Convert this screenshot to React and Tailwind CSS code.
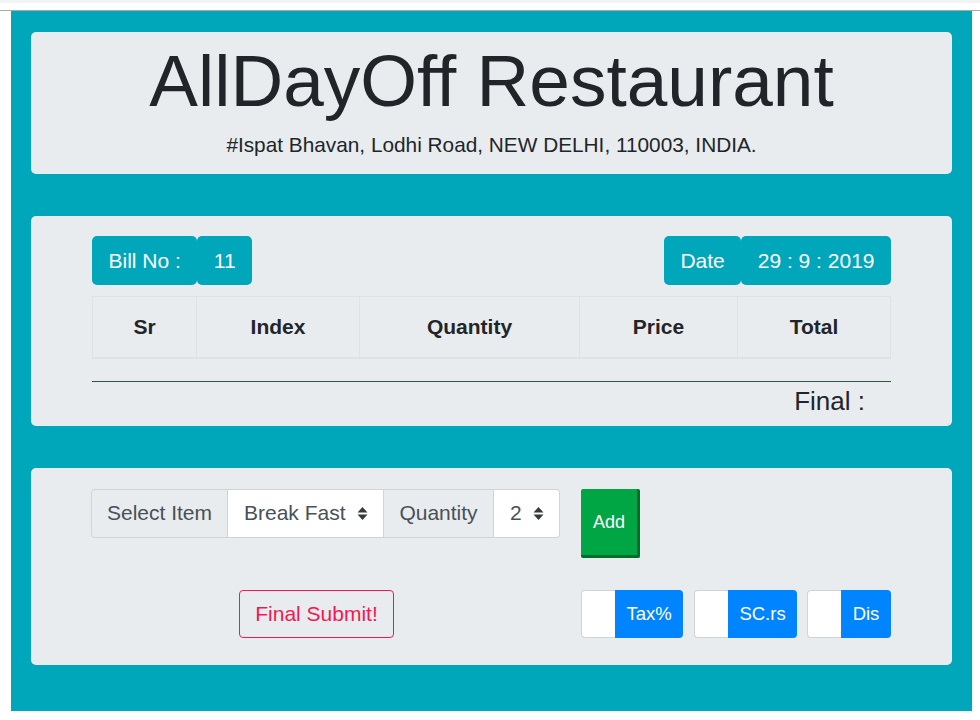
import React from 'react';

const Arrows = () => (
    <svg width="11" height="15" viewBox="0 0 11 15" className="shrink-0">
        <path d="M0.5 6.5 L5.5 1 L10.5 6.5 Z" fill="#343a40" />
        <path d="M0.5 8.5 L5.5 14 L10.5 8.5 Z" fill="#343a40" />
    </svg>
);

const AddonInput = ({ label, labelW, className = '' }) => (
    <div className={`flex h-[48px] ${className}`}>
        <div className="w-[34px] bg-white border border-r-0 border-[#ced4da] rounded-l-[4px]"></div>
        <div className={`${labelW} bg-[#0084ff] text-white text-[18.5px] flex items-center justify-center rounded-r-[4px]`}>
            {label}
        </div>
    </div>
);

const App = () => {
    const cols = [
        { name: 'Sr', w: 'w-[103px]' },
        { name: 'Index', w: 'w-[163px]' },
        { name: 'Quantity', w: 'w-[220px]' },
        { name: 'Price', w: 'w-[158px]' },
        { name: 'Total', w: 'flex-1' },
    ];

    return (
        <div className="w-[980px] h-[720px] bg-white font-['Liberation_Sans',Arial,sans-serif] text-[#212529] overflow-hidden">
            <div className="h-[3px] bg-[#f1f3f5]"></div>
            <div className="h-[7px]"></div>
            <div className="h-px bg-[#a9a9a9]"></div>

            <div className="ml-[11px] w-[961px] h-[700px] bg-[#00a6ba] px-[20px] pt-[21px] flex flex-col gap-[42px]">
                {/* Header */}
                <div className="h-[142px] bg-[#e9ecef] rounded-[5px] flex flex-col items-center">
                    <h1 className="text-[73px] leading-none mt-[12px] text-[#212529]">AllDayOff Restaurant</h1>
                    <p className="text-[20.8px] leading-[30px] mt-[13px]">#Ispat Bhavan, Lodhi Road, NEW DELHI, 110003, INDIA.</p>
                </div>

                {/* Bill */}
                <div className="h-[210px] bg-[#e9ecef] rounded-[5px] px-[61px] pt-[20px]">
                    <div className="flex justify-between text-[21px]">
                        <div className="flex">
                            <div className="h-[49px] px-[16.5px] bg-[#00a6ba] text-white flex items-center rounded-[5px]">Bill No :</div>
                            <div className="h-[49px] px-[16.5px] bg-[#00a6ba] text-white flex items-center rounded-[5px]">11</div>
                        </div>
                        <div className="flex">
                            <div className="h-[49px] px-[16.5px] bg-[#00a6ba] text-white flex items-center rounded-[5px]">Date</div>
                            <div className="h-[49px] px-[16.5px] bg-[#00a6ba] text-white flex items-center rounded-[5px]">29 : 9 : 2019</div>
                        </div>
                    </div>

                    <div className="mt-[11px] flex border border-[#dee2e6] border-b-2">
                        {cols.map((c, i) => (
                            <div
                                key={c.name}
                                className={`${c.w} h-[60px] flex items-center justify-center font-bold text-[21px] ${i > 0 ? 'border-l border-[#dee2e6]' : ''}`}
                            >
                                {c.name}
                            </div>
                        ))}
                    </div>

                    <div className="mt-[22px] h-px bg-[#2b5a40]"></div>
                    <div className="flex justify-end pr-[26px]">
                        <span className="text-[26px] leading-[34px] mt-[2px]">Final :</span>
                    </div>
                </div>

                {/* Entry */}
                <div className="h-[197px] bg-[#e9ecef] rounded-[5px] pl-[60px] pt-[21px]">
                    <div className="flex items-start">
                        <div className="flex h-[49px] text-[21px] text-[#495057]">
                            <div className="w-[137px] bg-[#e9ecef] border border-[#ced4da] rounded-l-[4px] flex items-center justify-center pb-px">Select Item</div>
                            <div className="w-[155px] bg-white border-y border-[#ced4da] flex items-center justify-between pl-[16px] pr-[15px] pb-px">
                                <span>Break Fast</span>
                                <Arrows />
                            </div>
                            <div className="w-[111px] bg-[#e9ecef] border border-[#ced4da] flex items-center justify-center pb-px">Quantity</div>
                            <div className="w-[66px] bg-white border border-l-0 border-[#ced4da] rounded-r-[4px] flex items-center justify-between pl-[16px] pr-[15px] pb-px">
                                <span>2</span>
                                <Arrows />
                            </div>
                        </div>
                        <button className="ml-[21px] w-[59px] h-[69px] bg-[#00a544] border-r-[3px] border-b-[3px] border-[#006b2b] rounded-[2px] text-white text-[18px]">
                            Add
                        </button>
                    </div>

                    <div className="flex items-start mt-[32px]">
                        <button className="ml-[148px] w-[155px] h-[48px] border border-[#f5174f] text-[#f5174f] text-[21px] rounded-[4px]">
                            Final Submit!
                        </button>
                        <div className="ml-[187px] flex">
                            <AddonInput label="Tax%" labelW="w-[68px]" />
                            <AddonInput label="SC.rs" labelW="w-[69px]" className="ml-[11px]" />
                            <AddonInput label="Dis" labelW="w-[50px]" className="ml-[10px]" />
                        </div>
                    </div>
                </div>
            </div>
        </div>
    );
};

export default App;
